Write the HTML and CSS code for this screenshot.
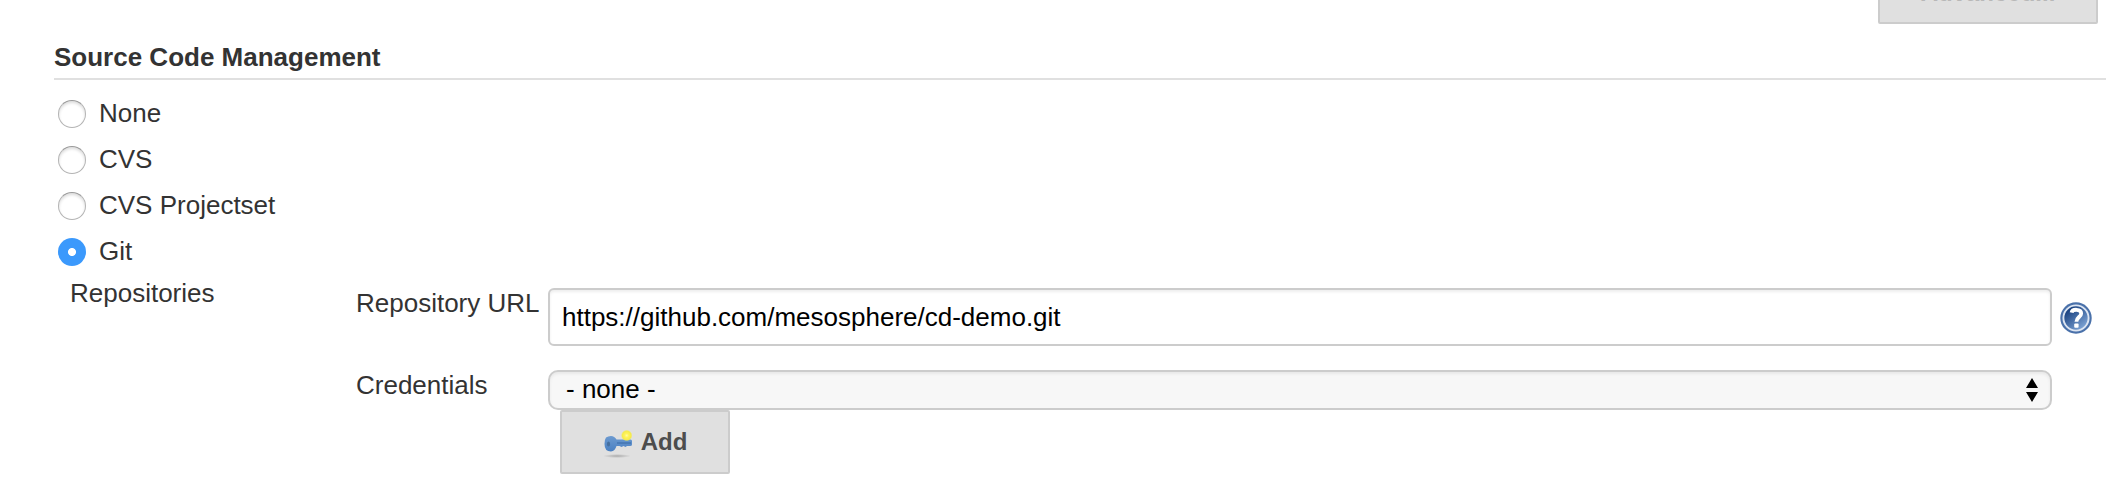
FILE: index.html
```html
<!DOCTYPE html>
<html lang="en">
<head>
<meta charset="utf-8">
<title>Source Code Management</title>
<link rel="stylesheet" href="styles.css">
</head>
<body>
<main class="page">
  <div class="toolbar"><button class="button button-advanced" type="button">Advanced...</button></div>
  <h2 class="heading">Source Code Management</h2>
  <div class="options">
    <label class="option"><span class="radio"></span><span class="option-text">None</span></label>
    <label class="option"><span class="radio"></span><span class="option-text">CVS</span></label>
    <label class="option"><span class="radio"></span><span class="option-text">CVS Projectset</span></label>
    <label class="option"><span class="radio radio-on"></span><span class="option-text">Git</span></label>
  </div>
  <section class="repositories">
    <div class="section-label">Repositories</div>
    <div class="fields">
      <div class="label">Repository URL</div>
      <div class="textbox">https://github.com/mesosphere/cd-demo.git</div>
      <svg class="help" viewBox="0 0 32 32">
        <defs><linearGradient id="helpFill" x1="0.1" y1="0" x2="0.9" y2="1"><stop offset="0.15" stop-color="#194180"/><stop offset="0.95" stop-color="#86acdc"/></linearGradient></defs>
        <circle cx="16" cy="16" r="15.7" fill="#4a71aa"/>
        <circle cx="16" cy="16" r="12.6" fill="url(#helpFill)" stroke="#dce5f2" stroke-width="1.9"/>
        <path d="M11.6 10.6C12.2 6.8 21.2 6.6 21.2 11.4C21.2 15 16.4 15.2 16.4 19.8" fill="none" stroke="#fff" stroke-width="3.8"/>
        <rect x="14.2" y="21.6" width="4.4" height="4.2" rx="1" fill="#fff"/>
      </svg>
      <div class="label label-credentials">Credentials</div>
      <div class="select"><span>- none -</span>
        <svg class="arrows" viewBox="0 0 12 24"><path d="M6 0L12 10H0ZM0 14H12L6 24Z"/></svg>
      </div>
      <button class="button button-add" type="button">
        <svg class="key" viewBox="0 0 32 32">
          <defs>
            <linearGradient id="keyFill" x1="0" y1="0" x2="0" y2="1"><stop offset="0" stop-color="#6c9ad0"/><stop offset="1" stop-color="#4a80c2"/></linearGradient>
            <radialGradient id="glow"><stop offset="0" stop-color="#fffba8"/><stop offset="0.35" stop-color="#fff35a"/><stop offset="0.75" stop-color="#f5eb4c"/><stop offset="1" stop-color="#f5eb4c" stop-opacity="0"/></radialGradient>
            <radialGradient id="shade"><stop offset="0" stop-color="#aaa"/><stop offset="1" stop-color="#aaa" stop-opacity="0"/></radialGradient>
          </defs>
          <ellipse cx="14" cy="30" rx="14" ry="2" fill="url(#shade)"/>
          <path d="M3 11.5Q5 10 8 10Q11.5 10 13.5 13.5H27.5Q29 13.5 29 15V18.5Q29 20 27 20H24L22.5 21L20.5 20L18.5 21L16.5 20H13.5Q12 25 8 25.5Q1.5 25.5 1.5 18Q1.5 13.5 3 11.5Z" fill="url(#keyFill)"/>
          <path d="M14 17H28" stroke="#3f70ac" stroke-width="1.2"/>
          <ellipse cx="5.5" cy="18" rx="1.6" ry="2.6" fill="#466f9e"/>
          <circle cx="23.7" cy="9.5" r="5.8" fill="url(#glow)"/>
        </svg>
        <span>Add</span>
      </button>
    </div>
  </section>
</main>
</body>
</html>
```
FILE: styles.css
```css
* { box-sizing: border-box; }
body { margin: 0; background: #fff; color: #333; font: 26px/30px "Liberation Sans", Arial, sans-serif; }
.page { height: 488px; overflow: hidden; }
.toolbar { display: flex; justify-content: flex-end; align-items: flex-end; height: 24px; padding-right: 8px; }
.button {
  display: flex; flex-shrink: 0; align-items: center; justify-content: center;
  height: 64px; margin: 0; padding: 0; border: 2px solid #ccc; border-radius: 2px;
  background: #e0e0e0; color: #4d4d4d; font: bold 24px/28px "Liberation Sans", Arial, sans-serif;
}
.button-advanced { width: 220px; padding-top: 1px; color: #b8b8b8; }
.heading { height: 56px; margin: 0 0 0 54px; padding-top: 18px; border-bottom: 2px solid #e0e0e0; font-size: 26px; line-height: 30px; }
.options { padding: 11px 0 0 58px; }
.option { display: flex; align-items: center; gap: 13px; height: 46px; }
.option-text { padding-bottom: 2px; }
.radio {
  width: 28px; height: 28px; border: 1px solid #b4b4b4; border-top-color: #999; border-radius: 50%;
  background: #fff; box-shadow: inset 0 2px 3px #ddd;
}
.radio-on { border: 0; background: radial-gradient(circle, #fff 3.6px, #3b99fc 4.4px); box-shadow: none; }
.repositories { display: flex; padding-left: 70px; }
.section-label { width: 286px; padding-top: 3px; }
.fields { display: grid; grid-template-columns: 192px 1504px 40px; padding-top: 13px; }
.textbox {
  height: 58px; padding: 12px; border: 2px solid #ccc; border-radius: 6px;
  box-shadow: inset 0 2px 3px #eee; color: #000;
}
.help { width: 32px; height: 32px; margin: 14px 0 0 8px; }
.label-credentials { padding-top: 24px; }
.select {
  display: flex; justify-content: space-between; align-items: center; height: 40px; margin-top: 24px; padding: 0 12px 2px 16px;
  border: 2px solid #ccc; border-radius: 10px; background: #f7f7f7; box-shadow: inset 0 2px 3px #e8e8e8; color: #000;
}
.arrows { width: 12px; height: 24px; margin-top: 2px; fill: #000; }
.button-add { grid-column: 2; width: 170px; margin-left: 12px; gap: 6px; }
.key { width: 32px; height: 32px; }
```
